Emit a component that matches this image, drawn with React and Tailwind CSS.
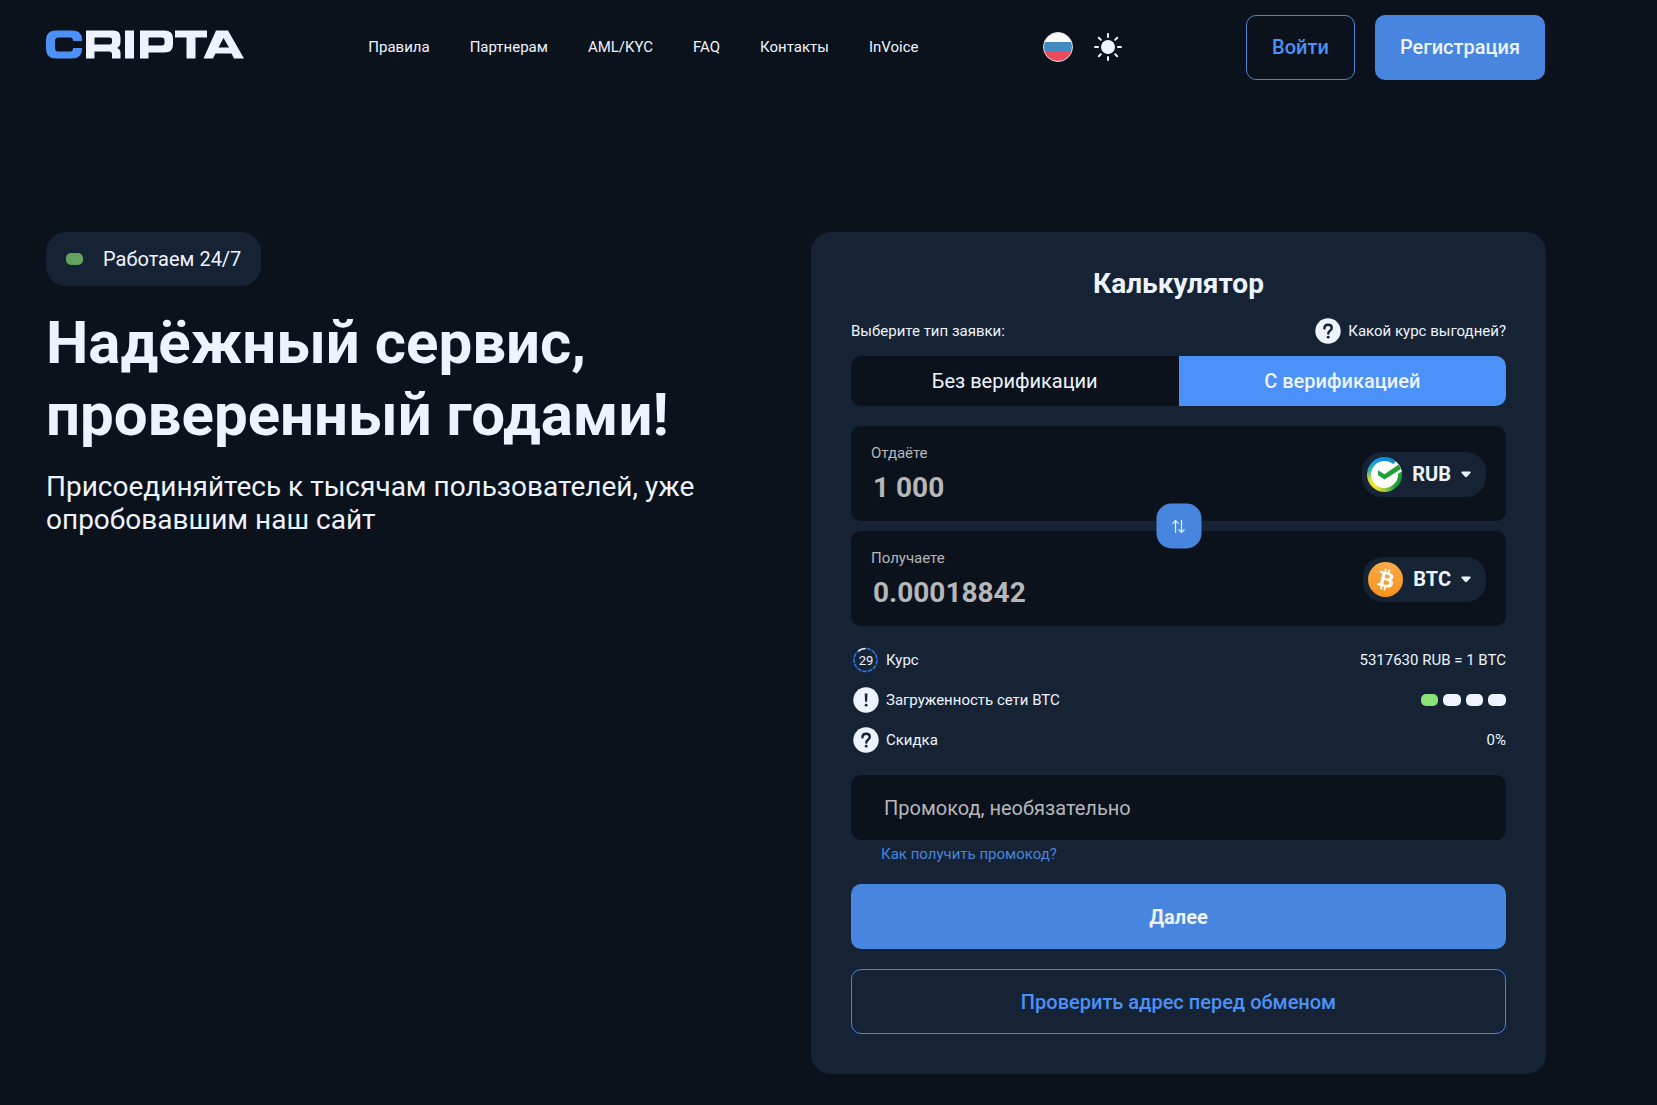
import React, { useState } from "react";

const navLinks = ["Правила", "Партнерам", "AML/KYC", "FAQ", "Контакты", "InVoice"];

function Logo() {
  return (
    <svg viewBox="0 0 198 29" className="block h-[29px] w-[198px]" role="img" aria-label="Cripta">
      <path
        fill="#4b91f7"
        d="M10 .5H26Q36 .5 36 9.500V11H27V10.500Q27 7.500 24 7.500H12.500Q9 7.500 9 11V18Q9 21.500 12.500 21.500H24Q27 21.500 27 18.500V18H36V19Q36 28.500 26 28.500H10Q0 28.500 0 19V10Q0 .5 10 .5Z"
      />
      <g fill="#edf4ff" fillRule="evenodd">
        <path d="M40 .5H67.500Q74.500 .5 74.500 7.500V11.500Q74.500 16.500 71 18Q74.500 19 74.500 23V28.500H66V24.500Q66 21.500 63 21.500H48.500V28.500H40ZM48.500 7.500V14.500H63.500Q66 14.500 66 12.500V9.500Q66 7.500 63.500 7.500Z" />
        <path d="M79 .5H88V28.500H79Z" />
        <path d="M94 .5H118.500Q127 .5 127 8.500V14.500Q127 22.500 118.500 22.500H102.500V28.500H94ZM102.500 7.500V15.500H115.500Q118.500 15.500 118.500 13V10Q118.500 7.500 115.500 7.500Z" />
        <path d="M129 .5H161V7.500H149.500V28.500H140.500V7.500H129Z" />
        <path d="M170 .5H182L198 28.500H188L185.500 23.500H169.500L167 28.500H157.500ZM177.500 8L172.500 17.500H183Z" />
      </g>
    </svg>
  );
}

function RussianFlag() {
  return (
    <svg viewBox="0 0 30 30" className="block size-[30px]" aria-hidden="true">
      <defs>
        <clipPath id="flag-clip">
          <circle cx="15" cy="15" r="14.500" />
        </clipPath>
      </defs>
      <g clipPath="url(#flag-clip)">
        <path fill="#f9f9f9" d="M0 0h30v10H0z" />
        <path fill="#428bc1" d="M0 10h30v10H0z" />
        <path fill="#ed4c5c" d="M0 20h30v10H0z" />
      </g>
      <circle cx="15" cy="15" r="14.500" fill="none" stroke="#d8dde6" />
    </svg>
  );
}

function Sun() {
  return (
    <svg viewBox="0 0 28 28" className="block size-7" aria-hidden="true">
      <circle cx="14" cy="14" r="7" fill="#edf4ff" />
      <path
        d="M14 1v3M14 24v3M1 14h3M24 14h3M4.800 4.800l2 2M21.200 21.200l2 2M4.800 23.200l2-2M21.200 6.800l2-2"
        stroke="#edf4ff"
        strokeWidth="2"
        strokeLinecap="round"
      />
    </svg>
  );
}

function QuestionIcon() {
  return (
    <svg viewBox="0 0 26 26" className="block size-[26px] shrink-0" aria-hidden="true">
      <circle cx="13" cy="13" r="12.700" fill="#edf4ff" />
      <path d="M9.400 10.400C9.400 8 11 6.700 13.100 6.700c2.200 0 3.700 1.300 3.700 3.200 0 2.700-3.500 2.700-3.500 5.600" fill="none" stroke="#162335" strokeWidth="2.400" strokeLinecap="round" />
      <circle cx="13.200" cy="19.200" r="1.400" fill="#162335" />
    </svg>
  );
}

function ExclamationIcon() {
  return (
    <svg viewBox="0 0 26 26" className="block size-[26px] shrink-0" aria-hidden="true">
      <circle cx="13" cy="13" r="12.700" fill="#edf4ff" />
      <path d="M11.700 6.500h2.800l-.4 8.300h-2z" fill="#162335" />
      <circle cx="13.100" cy="18.200" r="1.400" fill="#162335" />
    </svg>
  );
}

function Countdown({ seconds }) {
  return (
    <span className="relative grid size-[26px] shrink-0 place-items-center">
      <svg viewBox="0 0 26 26" className="absolute inset-0" aria-hidden="true">
        <circle cx="12.500" cy="13" r="11.500" fill="none" stroke="#2b74dd" strokeWidth="1.600" strokeDasharray="4.500 1" />
        <path d="M5.500 4A11.500 11.500 0 0 1 12.500 1.500" fill="none" stroke="#edf4ff" strokeWidth="1.600" />
      </svg>
      <span className="text-[13px] leading-none">{seconds}</span>
    </span>
  );
}

function SberIcon() {
  return (
    <span className="relative block size-[35px] overflow-hidden rounded-full bg-[conic-gradient(from_0deg,#0f8de0_0deg,#1a8fc0_35deg,#21a038_75deg,#21a038_140deg,#a8cc3c_180deg,#f2e72d_220deg,#c8dc3a_255deg,#36b0a0_285deg,#0f9bf0_325deg,#0f8de0_360deg)]">
      <svg viewBox="0 0 35 35" className="absolute inset-0" aria-hidden="true">
        <circle cx="17.500" cy="17.500" r="13.500" fill="#fff" />
        <path d="M17 17L29 4.300L32 7L35 11V14.500L30.500 17L17 26z" fill="#fff" />
        <path d="M11 13.200L17.500 17.200L31.800 7.500L34 12L17.500 22.400L11 18.200Z" fill="#21a038" />
      </svg>
    </span>
  );
}

function BitcoinIcon() {
  return (
    <svg viewBox="0 0 32 32" className="block size-[35px]" aria-hidden="true">
      <defs>
        <linearGradient id="btc-fill" x1="0" y1="0" x2="0" y2="1">
          <stop offset="0" stopColor="#f9aa4b" />
          <stop offset="1" stopColor="#f7931a" />
        </linearGradient>
      </defs>
      <circle cx="16" cy="16" r="16" fill="url(#btc-fill)" />
      <path
        fill="#fff"
        d="M23.189 14.020c.314-2.096-1.283-3.223-3.465-3.975l.708-2.840-1.728-.43-.690 2.765c-.454-.114-.920-.220-1.385-.326l.695-2.783L15.596 6l-.708 2.839c-.376-.086-.746-.170-1.104-.260l.002-.009-2.384-.595-.460 1.846s1.283.294 1.256.312c.700.175.826.638.805 1.006l-.806 3.235c.048.012.110.030.180.057l-.183-.045-1.130 4.532c-.086.212-.303.531-.793.410.018.025-1.256-.313-1.256-.313l-.858 1.978 2.250.561c.418.105.828.215 1.231.318l-.715 2.872 1.727.430.708-2.840c.472.127.930.245 1.378.357l-.706 2.828 1.728.430.715-2.866c2.948.558 5.164.333 6.097-2.333.752-2.146-.037-3.385-1.588-4.192 1.130-.260 1.980-1.003 2.207-2.538zm-3.950 5.538c-.533 2.147-4.148.986-5.320.695l.950-3.805c1.172.293 4.929.872 4.370 3.110zm.535-5.569c-.487 1.953-3.495.960-4.470.717l.860-3.450c.975.243 4.118.696 3.610 2.733z"
      />
    </svg>
  );
}

function Caret() {
  return (
    <svg viewBox="0 0 10 7" className="block h-[7px] w-[10px]" aria-hidden="true">
      <path d="M1.200.5h7.600c.9 0 1.200.9.600 1.500L6 5.700c-.6.600-1.400.6-2 0L.6 2C0 1.400.3.5 1.200.5Z" fill="#edf4ff" />
    </svg>
  );
}

function AmountBox({ id, label, value, onChange, icon, currency }) {
  return (
    <div className="flex items-center justify-between rounded-[10px] bg-[#0b121b] px-5 pt-[18px] pb-[17px]">
      <div className="flex min-w-0 flex-1 flex-col gap-[9px]">
        <label htmlFor={id} className="text-[15px] leading-[18px] text-[#b5b7ba]">
          {label}
        </label>
        <input
          id={id}
          value={value}
          onChange={onChange}
          className="w-full bg-transparent px-[2px] text-[28px] leading-[33px] font-bold text-[#b5b7ba] outline-none"
        />
      </div>
      <button type="button" className="flex h-[45px] items-center rounded-[20px] bg-[#162335] pr-[15px] pl-[5px]">
        {icon}
        <span className="mx-[10px] text-[20px] font-bold">{currency}</span>
        <Caret />
      </button>
    </div>
  );
}

export default function App() {
  const [give, setGive] = useState("1 000");
  const [receive, setReceive] = useState("0.00018842");
  const [promo, setPromo] = useState("");

  return (
    <div className="min-h-screen bg-[#0b121b] pr-[111px] pl-[46px] font-[Roboto,sans-serif] text-[15px] text-[#edf4ff]">
      <header className="flex items-center justify-between pt-[15px] pr-px">
        <a href="#" className="pb-1.5">
          <Logo />
        </a>
        <nav className="flex gap-10">
          {navLinks.map((link) => (
            <a key={link} href="#">
              {link}
            </a>
          ))}
        </nav>
        <div className="flex items-center gap-[21px] pb-0.5">
          <button type="button" aria-label="Язык: русский">
            <RussianFlag />
          </button>
          <button type="button" aria-label="Светлая тема">
            <Sun />
          </button>
        </div>
        <div className="flex gap-5 text-[20px] font-medium">
          <button type="button" className="h-[65px] rounded-[10px] border border-[#4785de] px-[25px] pb-0.5 text-[#4b91f7]">
            Войти
          </button>
          <button type="button" className="h-[65px] rounded-[10px] bg-[#4785de] px-[25px] pb-0.5">
            Регистрация
          </button>
        </div>
      </header>

      <main className="grid grid-cols-[49%_49%] items-start justify-between pt-[152px] pb-[30px]">
        <section>
          <div className="inline-flex h-[54px] items-center gap-5 rounded-[20px] bg-[#162335] px-5 text-[20px]">
            <span className="h-3 w-[17px] rounded-[5px] bg-[#64a25f]" />
            Работаем 24/7
          </div>
          <h1 className="mt-[21px] text-[60px] leading-[72px] font-bold">
            Надёжный сервис,
            <br />
            проверенный годами!
          </h1>
          <p className="mt-[19px] max-w-[660px] text-[28px] leading-[33px]">
            Присоединяйтесь к тысячам пользователей, уже опробовавшим наш сайт
          </p>
        </section>

        <section className="rounded-[20px] bg-[#162335] px-10 pt-[35px] pb-10">
          <h2 className="text-center text-[28px] leading-[33px] font-bold">Калькулятор</h2>
          <div className="mt-[18px] flex items-center justify-between">
            <span>Выберите тип заявки:</span>
            <a href="#" className="flex items-center gap-[7px]">
              <QuestionIcon />
              Какой курс выгодней?
            </a>
          </div>
          <div className="mt-3 grid h-[50px] grid-cols-2 overflow-hidden rounded-[10px] bg-[#0b121b] text-[20px]">
            <button type="button">Без верификации</button>
            <button type="button" className="bg-[#4b91f7] font-medium">
              С верификацией
            </button>
          </div>

          <div className="relative mt-5 flex flex-col gap-[10px]">
            <AmountBox
              id="give"
              label="Отдаёте"
              value={give}
              onChange={(e) => setGive(e.target.value)}
              icon={<SberIcon />}
              currency="RUB"
            />
            <AmountBox
              id="receive"
              label="Получаете"
              value={receive}
              onChange={(e) => setReceive(e.target.value)}
              icon={<BitcoinIcon />}
              currency="BTC"
            />
            <button
              type="button"
              aria-label="Поменять местами"
              className="absolute top-1/2 left-1/2 grid size-[45px] -translate-x-1/2 -translate-y-1/2 place-items-center rounded-[15px] bg-[#4785de]"
            >
              <svg viewBox="0 0 14 14" className="size-[14px]" fill="none" stroke="#edf4ff" strokeWidth="1.200" aria-hidden="true">
                <path d="M4 13.500V1.500M1 4.200L4 1.200L7 4.200M10 .5V12.500M7 9.800L10 12.800L13 9.800" />
              </svg>
            </button>
          </div>

          <dl className="mt-[21px] flex flex-col gap-[14px] pl-[2px]">
            <div className="flex items-center justify-between">
              <dt className="flex items-center gap-[7px]">
                <Countdown seconds={29} />
                Курс
              </dt>
              <dd>5317630 RUB = 1 BTC</dd>
            </div>
            <div className="flex items-center justify-between">
              <dt className="flex items-center gap-[7px]">
                <ExclamationIcon />
                Загруженность сети BTC
              </dt>
              <dd className="flex gap-[5px]">
                <span className="h-3 w-[17px] rounded-[5px] bg-[#8be276]" />
                <span className="h-3 w-[18px] rounded-[5px] bg-[#edf4ff]" />
                <span className="h-3 w-[17px] rounded-[5px] bg-[#edf4ff]" />
                <span className="h-3 w-[18px] rounded-[5px] bg-[#edf4ff]" />
              </dd>
            </div>
            <div className="flex items-center justify-between">
              <dt className="flex items-center gap-[7px]">
                <QuestionIcon />
                Скидка
              </dt>
              <dd>0%</dd>
            </div>
          </dl>

          <input
            aria-label="Промокод"
            placeholder="Промокод, необязательно"
            value={promo}
            onChange={(e) => setPromo(e.target.value)}
            className="mt-[22px] block h-[65px] w-full rounded-[10px] bg-[#0b121b] px-[33px] text-[20px] outline-none placeholder:text-[#b5b7ba]"
          />
          <a href="#" className="mt-[5px] ml-[30px] block w-fit leading-[18px] text-[#4785de]">
            Как получить промокод?
          </a>
          <button type="button" className="mt-[21px] block h-[65px] w-full rounded-[10px] bg-[#4785de] text-[20px] font-bold">
            Далее
          </button>
          <button
            type="button"
            className="mt-5 block h-[65px] w-full rounded-[10px] border border-[#4785de] text-[20px] font-medium text-[#4b91f7]"
          >
            Проверить адрес перед обменом
          </button>
        </section>
      </main>
    </div>
  );
}
